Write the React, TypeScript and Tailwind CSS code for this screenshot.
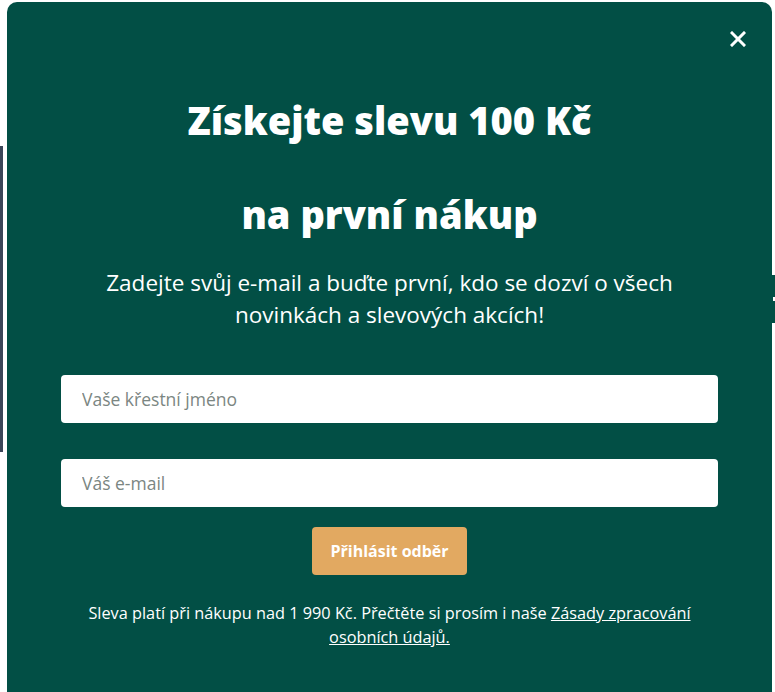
export default function App() {
  return (
    <div className="flex min-h-[692px] bg-white font-['Open_Sans',sans-serif]">
      <div className="w-[3px] shrink-0">
        <div className="mt-[146px] h-[306px] bg-[#3b4658]" />
      </div>
      <div className="ml-[4px] mt-[2px] flex w-[765px] shrink-0 flex-col items-center rounded-t-[10px] bg-[#024f45] px-[54px] text-white">
        <div className="flex w-full justify-end pt-[27px]">
          <button className="mr-[-30px] flex h-[20px] w-[20px] items-center justify-center">
            <svg width="16" height="16" viewBox="0 0 16 16" stroke="white" strokeWidth="3" strokeLinecap="square">
              <line x1="2" y1="2" x2="14" y2="14" />
              <line x1="14" y1="2" x2="2" y2="14" />
            </svg>
          </button>
        </div>
        <h2 className="mt-[51px] text-[38px] leading-[40px] font-extrabold">Získejte slevu 100 Kč</h2>
        <h2 className="mt-[54px] text-[38px] leading-[40px] font-extrabold">na první nákup</h2>
        <p className="mt-[33px] text-center text-[22.5px] leading-[32px]">
          Zadejte svůj e-mail a buďte první, kdo se dozví o všech
          <br />
          novinkách a slevových akcích!
        </p>
        <input
          className="mt-[44px] h-[48px] w-full rounded-[4px] bg-white px-[21px] text-[17.5px] text-gray-800 outline-none placeholder:text-[#7b8682]"
          placeholder="Vaše křestní jméno"
        />
        <input
          className="mt-[36px] h-[48px] w-full rounded-[4px] bg-white px-[21px] text-[17.5px] text-gray-800 outline-none placeholder:text-[#7b8682]"
          placeholder="Váš e-mail"
        />
        <button className="mt-[20px] h-[48px] rounded-[4px] bg-[#e2a961] px-[18px] text-[16px] font-bold">
          Přihlásit odběr
        </button>
        <p className="mt-[26px] mb-[40px] text-center text-[16.3px] leading-[24px]">
          Sleva platí při nákupu nad 1 990 Kč. Přečtěte si prosím i naše{" "}
          <a className="underline" href="#">
            Zásady zpracování osobních údajů.
          </a>
        </p>
      </div>
      <div className="w-[3px] shrink-0">
        <div className="mt-[275px] flex h-[48px] items-center justify-center bg-[#024f45]">
          <div className="h-[4px] w-[2px] bg-white" />
        </div>
      </div>
    </div>
  )
}
